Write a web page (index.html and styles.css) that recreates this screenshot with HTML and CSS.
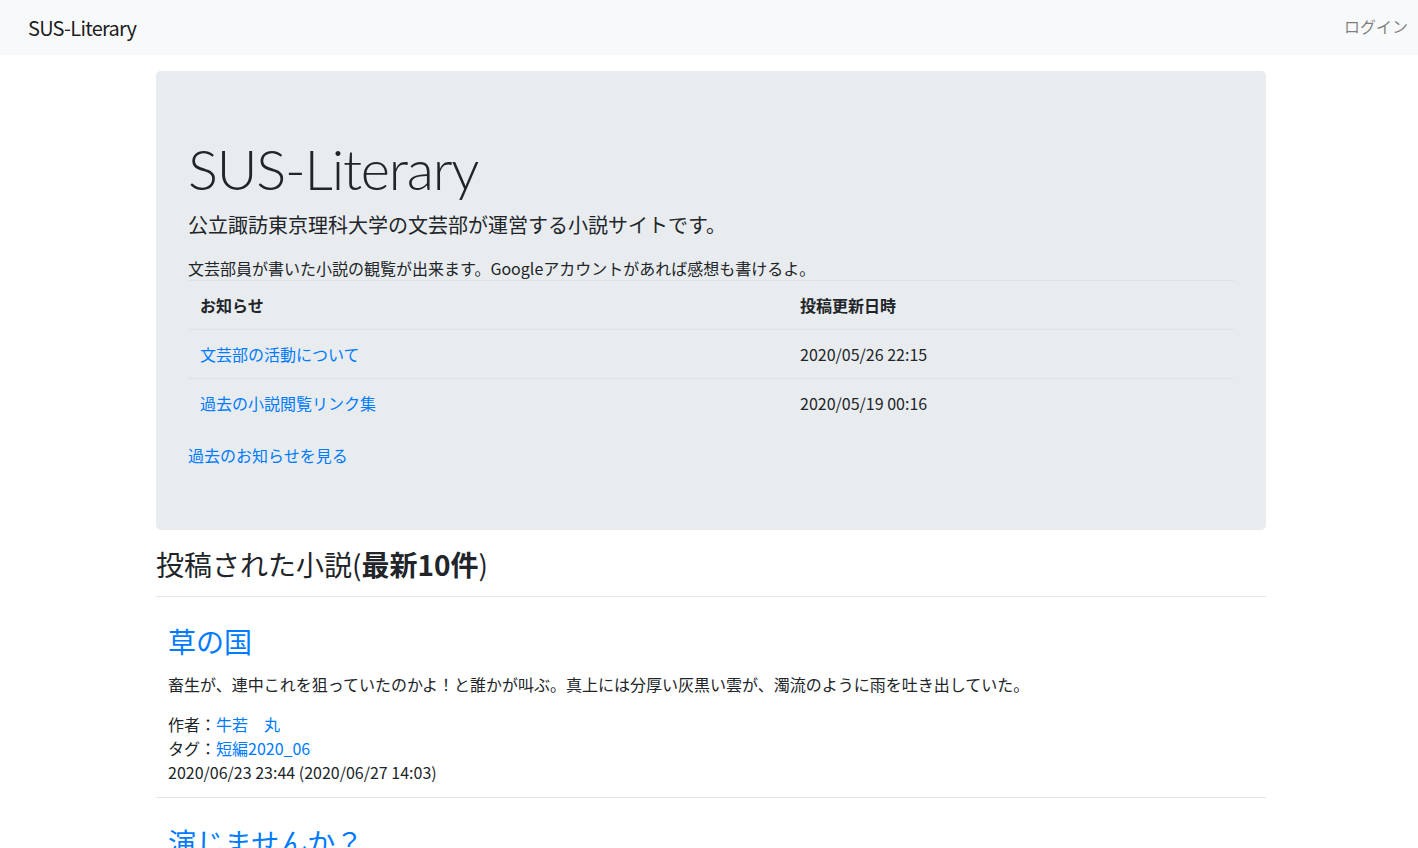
FILE: index.html
```html
<!DOCTYPE html>
<html lang="ja">
<head>
<meta charset="utf-8">
<title>SUS-Literary</title>
<link rel="stylesheet" href="styles.css">
</head>
<body>
<nav class="navbar">
  <a class="brand" href="#">SUS-Literary</a>
  <a class="login" href="#">ログイン</a>
</nav>
<main class="container">
  <section class="jumbotron">
    <h1 class="display">SUS-Literary</h1>
    <p class="lead">公立諏訪東京理科大学の文芸部が運営する小説サイトです。</p>
    <p class="desc">文芸部員が書いた小説の観覧が出来ます。Googleアカウントがあれば感想も書けるよ。</p>
    <table class="table">
      <thead>
        <tr><th class="col-title">お知らせ</th><th>投稿更新日時</th></tr>
      </thead>
      <tbody>
        <tr><td><a href="#">文芸部の活動について</a></td><td>2020/05/26 22:15</td></tr>
        <tr><td><a href="#">過去の小説閲覧リンク集</a></td><td>2020/05/19 00:16</td></tr>
      </tbody>
    </table>
    <a class="more" href="#">過去のお知らせを見る</a>
  </section>
  <h3 class="section-title">投稿された小説(<b>最新10件</b>)</h3>
  <hr class="rule">
  <article class="novel">
    <h3 class="novel-title"><a href="#">草の国</a></h3>
    <p class="novel-text">畜生が、連中これを狙っていたのかよ！と誰かが叫ぶ。真上には分厚い灰黒い雲が、濁流のように雨を吐き出していた。</p>
    <div class="meta">作者：<a href="#">牛若　丸</a></div>
    <div class="meta">タグ：<a href="#">短編2020_06</a></div>
    <div class="meta">2020/06/23 23:44 (2020/06/27 14:03)</div>
  </article>
  <hr class="rule">
  <article class="novel">
    <h3 class="novel-title"><a href="#">演じませんか？</a></h3>
  </article>
</main>
</body>
</html>
```

FILE: styles.css
```css
* { box-sizing: border-box; }
html, body { margin: 0; padding: 0; }
body {
  font-family: "Noto Sans CJK JP", "Noto Sans", sans-serif;
  font-size: 16px;
  line-height: 1.5;
  color: #212529;
  background: #fff;
  overflow: hidden;
}
a { color: #007bff; text-decoration: none; }

.navbar {
  display: flex;
  align-items: center;
  justify-content: space-between;
  height: 55px;
  padding: 0 10px 0 28px;
  background: #f8f9fa;
}
.brand {
  font-size: 20px;
  color: rgba(0, 0, 0, 0.9);
  line-height: 30px;
  letter-spacing: -0.75px;
}
.login {
  color: rgba(0, 0, 0, 0.5);
  position: relative;
  top: -2px;
}

.container {
  width: 1110px;
  margin: 0 0 0 156px;
}

.jumbotron {
  margin-top: 16px;
  padding: 64px 32px;
  background: #e9ecef;
  border-radius: 4.8px;
  height: 459px;
}
.display {
  margin: 0 0 8px;
  font-size: 56px;
  font-weight: 300;
  line-height: 1.2;
  letter-spacing: -1.2px;
  font-family: "Lato", "Noto Sans", sans-serif;
}
.lead {
  margin: 0 0 16px;
  font-size: 20px;
  font-weight: 400;
  line-height: 30px;
}
.desc { margin: 0; }

.table {
  width: 100%;
  border-collapse: collapse;
  margin-bottom: 16px;
}
.table th, .table td {
  padding: 12px;
  border-top: 1px solid #dee2e6;
  text-align: left;
  vertical-align: top;
  line-height: 24px;
}
.table thead th {
  font-weight: 700;
  border-bottom: 1px solid #dee2e6;
}
.table tbody tr:first-child td { border-top: none; }
.col-title { width: 600px; }
.more { display: block; line-height: 24px; }

.section-title {
  margin: 16px 0 14px;
  font-size: 28px;
  font-weight: 400;
  line-height: 36px;
}
.section-title b { font-weight: 700; }
.rule {
  margin: 0;
  border: 0;
  border-top: 1px solid rgba(0, 0, 0, 0.1);
}
.novel {
  padding: 26px 12px 13px;
}
.novel-title {
  margin: 0 0 13px;
  font-size: 28px;
  font-weight: 400;
  line-height: 36px;
}
.novel-text { margin: 0 0 16px; }
.meta { line-height: 24px; }
```
